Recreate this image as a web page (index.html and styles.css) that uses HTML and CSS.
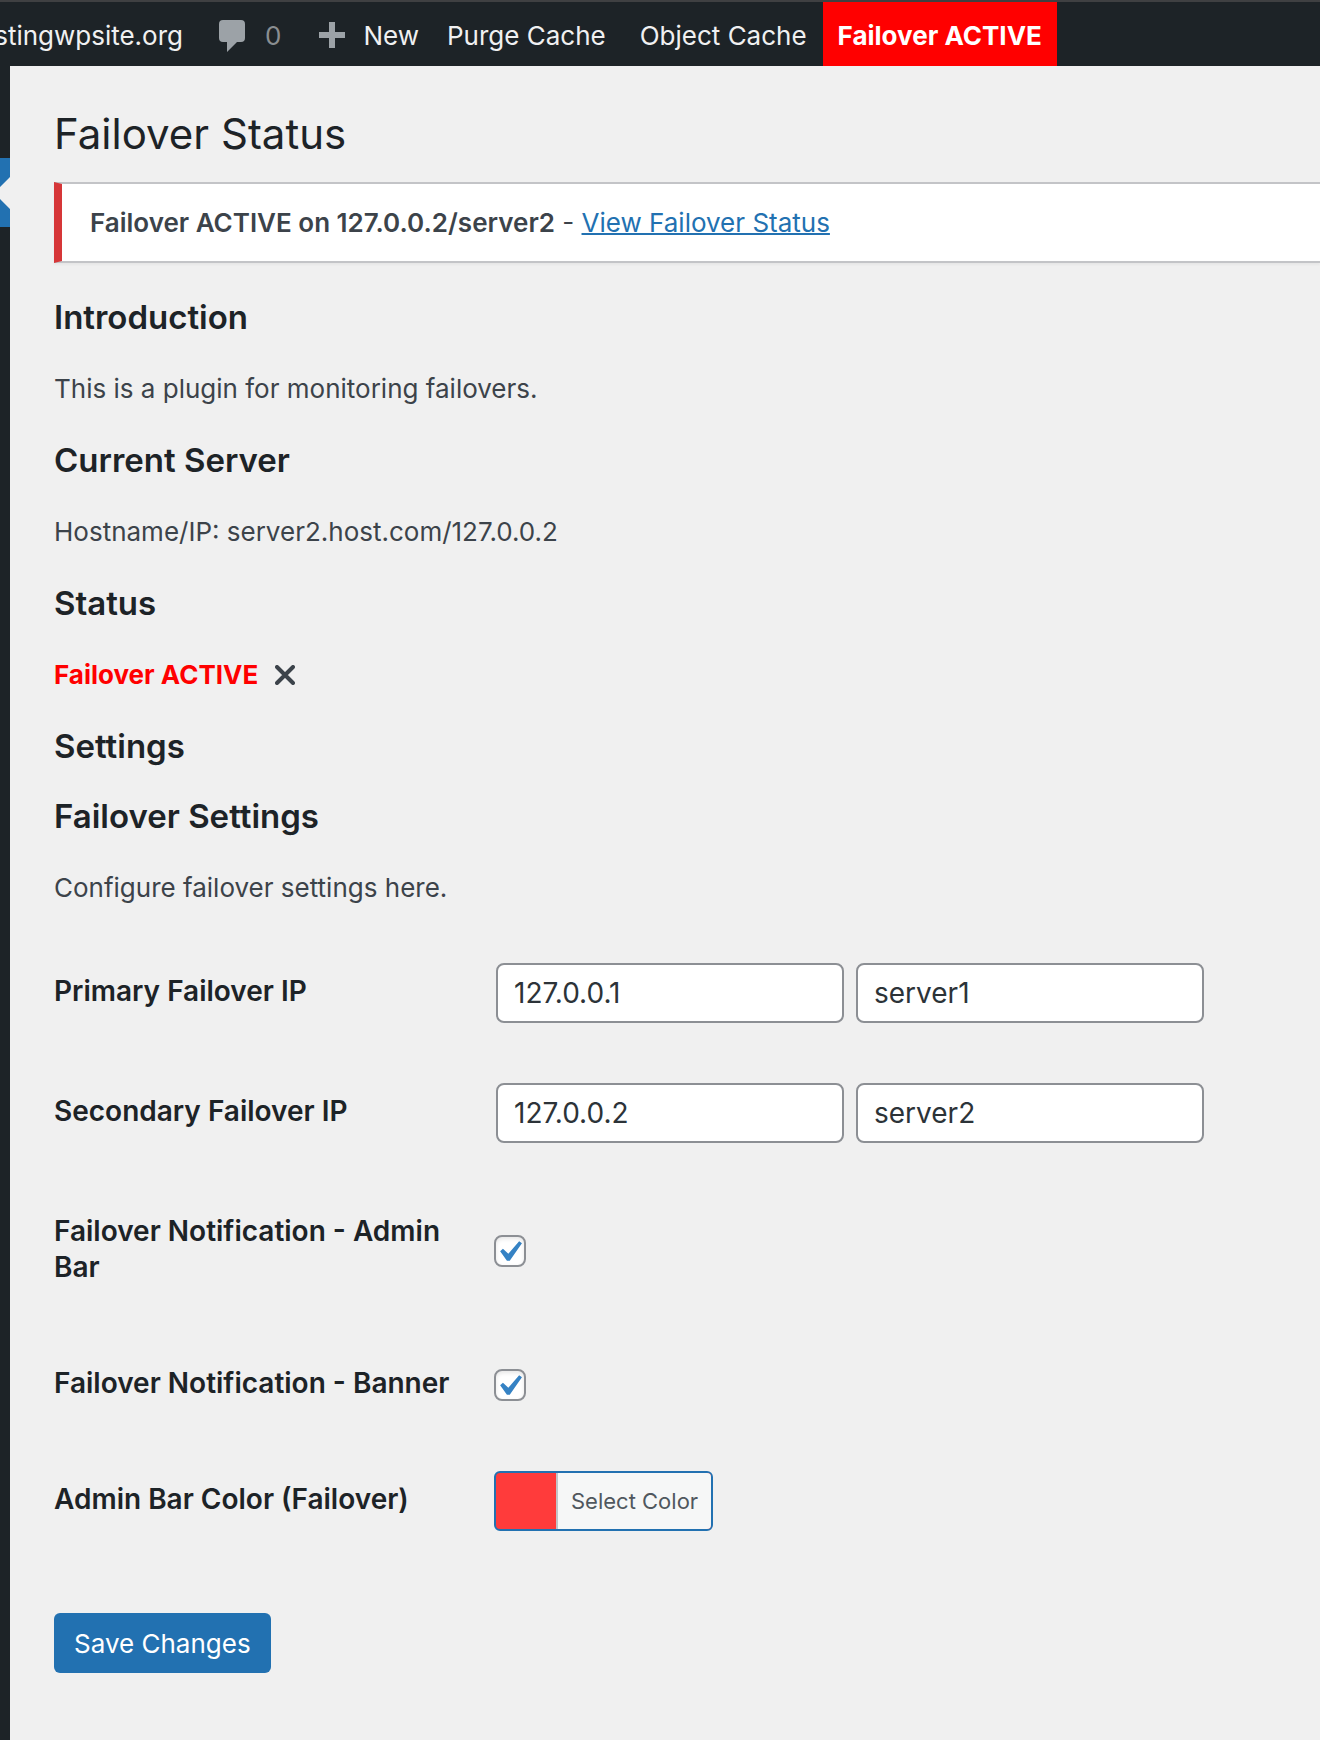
FILE: index.html
```html
<!DOCTYPE html>
<html lang="en">
<head>
<meta charset="utf-8">
<meta name="viewport" content="width=device-width, initial-scale=1">
<title>Failover Status</title>
<link rel="stylesheet" href="styles.css">
</head>
<body>
<nav class="adminbar" aria-label="Toolbar">
  <a class="site-name" href="#">stingwpsite.org</a>
  <a class="comments" href="#">
    <svg width="26" height="32" viewBox="0 0 26 32" aria-hidden="true"><path d="M4 0h18a4 4 0 0 1 4 4v14a4 4 0 0 1-4 4h-4L8 32V22H4a4 4 0 0 1-4-4V4a4 4 0 0 1 4-4z" fill="#9ca2a7"/></svg>
    <span>0</span>
  </a>
  <a class="new" href="#">
    <svg width="26" height="26" viewBox="0 0 26 26" aria-hidden="true"><path d="M10 0h6v10h10v6H16v10h-6V16H0v-6h10z" fill="#9ca2a7"/></svg>
    <span>New</span>
  </a>
  <a class="purge" href="#">Purge Cache</a>
  <a class="object" href="#">Object Cache</a>
  <a class="alert" href="#">Failover ACTIVE</a>
</nav>
<div class="layout">
  <aside class="menu"><div class="current"></div></aside>
  <main class="content">
    <h1>Failover Status</h1>
    <div class="notice"><strong>Failover ACTIVE on 127.0.0.2/server2</strong> - <a href="#">View Failover Status</a></div>
    <h2>Introduction</h2>
    <p>This is a plugin for monitoring failovers.</p>
    <h2>Current Server</h2>
    <p>Hostname/IP: server2.host.com/127.0.0.2</p>
    <h2>Status</h2>
    <p class="status"><strong>Failover ACTIVE</strong>
      <svg width="20" height="20" viewBox="0 0 20 20" aria-hidden="true"><path d="M2 2l16 16M18 2L2 18" stroke="#3c434a" stroke-width="4" stroke-linecap="round"/></svg>
    </p>
    <h2>Settings</h2>
    <form>
      <h2>Failover Settings</h2>
      <p>Configure failover settings here.</p>
      <div class="fields">
        <div class="row">
          <label for="ip1">Primary Failover IP</label>
          <div class="pair"><input class="text" id="ip1" type="text" value="127.0.0.1"><input class="text" type="text" value="server1" aria-label="Primary server name"></div>
        </div>
        <div class="row">
          <label for="ip2">Secondary Failover IP</label>
          <div class="pair"><input class="text" id="ip2" type="text" value="127.0.0.2"><input class="text" type="text" value="server2" aria-label="Secondary server name"></div>
        </div>
        <div class="row">
          <label for="bar">Failover Notification - Admin Bar</label>
          <div class="tick"><input class="check" id="bar" type="checkbox" checked></div>
        </div>
        <div class="row">
          <label for="banner">Failover Notification - Banner</label>
          <div class="tick"><input class="check" id="banner" type="checkbox" checked></div>
        </div>
        <div class="row">
          <label for="color">Admin Bar Color (Failover)</label>
          <div><button class="color" id="color" type="button"><span>Select Color</span></button></div>
        </div>
      </div>
      <button class="save" type="submit">Save Changes</button>
    </form>
  </main>
</div>
</body>
</html>
```
FILE: styles.css
```css
* { box-sizing: border-box; }

body {
  margin: 0;
  min-height: 100vh;
  display: flex;
  flex-direction: column;
  background: #f0f0f0;
  color: #3c434a;
  font: 26px/39px Inter, "Liberation Sans", sans-serif;
}

.adminbar {
  display: flex;
  height: 66px;
  border-top: 2px solid #3f4042;
  background: #1d2327;
  white-space: nowrap;
  overflow: hidden;
}
.adminbar a {
  display: flex;
  align-items: center;
  flex: none;
  padding-top: 2px;
  color: #f0f0f1;
  text-decoration: none;
}
.site-name {
  width: 183px;
  justify-content: flex-end;
}
.adminbar .comments {
  gap: 20px;
  margin-left: 36px;
  color: #8a8e91;
}
.comments svg { margin-top: 2px; }
.new {
  gap: 18px;
  margin-left: 38px;
}
.purge { margin-left: 28px; }
.object { margin-left: 34px; }
.adminbar .alert {
  margin-left: 16px;
  padding: 2px 15px 0;
  background: #f00;
  color: #fff;
  font-weight: 700;
}

.layout {
  display: flex;
  flex: 1;
}
.menu {
  flex: none;
  width: 10px;
  padding-top: 92px;
  background: linear-gradient(#1d2327 92px, #f0f0f0 92px, #f0f0f0 161px, #1d2327 161px);
}
.current {
  height: 69px;
  background: #2271b1;
  clip-path: polygon(0 0, 100% 0, 100% 19px, 0 29px, 0 41px, 100% 51px, 100% 100%, 0 100%);
}

.content {
  flex: 1;
  min-width: 0;
  padding: 38px 0 64px 44px;
}

h1 {
  margin: 0 0 18px;
  color: #1d2327;
  font-size: 42px;
  line-height: 60px;
  font-weight: 400;
}
h2 {
  margin: 34px 0;
  color: #1d2327;
  font-size: 33px;
  line-height: 36px;
  font-weight: 600;
}
p { margin: 26px 0; }
strong { font-weight: 600; }

.notice {
  margin-bottom: 36px;
  padding: 19px 28px;
  border: 2px solid #c3c4c7;
  border-left: 8px solid #d63638;
  border-right: 0;
  background: #fff;
  box-shadow: 0 2px 2px rgba(0, 0, 0, .04);
}
.notice a {
  color: #2271b1;
  text-decoration-thickness: 2px;
}

.status {
  display: flex;
  align-items: center;
  gap: 17px;
}
.status strong {
  color: #f00;
  font-weight: 700;
}

.fields {
  display: flex;
  flex-direction: column;
}
.row {
  display: grid;
  grid-template-columns: 400px minmax(0, 1fr);
  column-gap: 40px;
}
.row label {
  padding: 40px 0;
  color: #1d2327;
  font-size: 28px;
  line-height: 36px;
  font-weight: 600;
}
.row > div { padding: 30px 0; }
.row > .pair {
  display: flex;
  gap: 12px;
  padding-left: 2px;
}
.row > .tick {
  display: flex;
  align-items: center;
  padding: 4px 0 0;
}

.text {
  width: 348px;
  height: 60px;
  padding: 0 16px;
  border: 2px solid #8c8f94;
  border-radius: 8px;
  background: #fff;
  color: #2c3338;
  font: inherit;
  font-size: 28px;
}
.check {
  appearance: none;
  width: 32px;
  height: 32px;
  margin: 0;
  border: 2px solid #8c8f94;
  border-radius: 8px;
  background: #fff url("data:image/svg+xml,%3Csvg xmlns='http://www.w3.org/2000/svg' viewBox='0 0 20 20'%3E%3Cpath d='M14.83 4.89l1.34.94-5.81 8.38H9.02L5.78 9.67l1.34-1.25 2.57 2.4z' fill='%233582c4'/%3E%3C/svg%3E") -8px -6px / 42px 42px no-repeat;
  box-shadow: inset 0 2px 4px rgba(0, 0, 0, .1);
}
.color {
  display: block;
  height: 60px;
  padding: 0 0 0 60px;
  border: 2px solid #2271b1;
  border-radius: 6px;
  background: #ff3b3b;
  color: #50575e;
  font: inherit;
  font-size: 22px;
}
.color span {
  display: block;
  padding: 0 13px;
  border-left: 2px solid #c3c4c7;
  border-radius: 0 4px 4px 0;
  background: #f6f7f7;
  line-height: 56px;
}
.save {
  display: block;
  height: 60px;
  margin-top: 52px;
  padding: 0 20px;
  border: 0;
  border-radius: 6px;
  background: #2271b1;
  color: #fff;
  font: inherit;
}
```
